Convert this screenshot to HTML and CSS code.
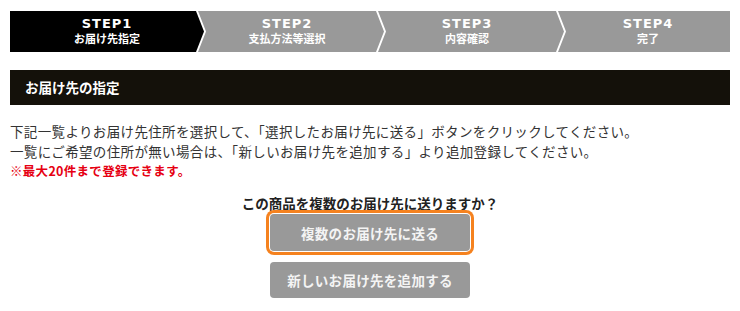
FILE: index.html
```html
<!DOCTYPE html>
<html lang="ja">
<head>
<meta charset="utf-8">
<title>お届け先の指定</title>
<link rel="stylesheet" href="styles.css">
</head>
<body>
<div class="page">
  <ol class="steps">
    <li class="step step--first step--active"><span class="step__num">STEP1</span><span class="step__label">お届け先指定</span></li>
    <li class="step step--mid"><span class="step__num">STEP2</span><span class="step__label">支払方法等選択</span></li>
    <li class="step step--mid"><span class="step__num">STEP3</span><span class="step__label">内容確認</span></li>
    <li class="step step--last"><span class="step__num">STEP4</span><span class="step__label">完了</span></li>
  </ol>

  <h2 class="heading">お届け先の指定</h2>

  <div class="intro">
    <p>下記一覧よりお届け先住所を選択して、「選択したお届け先に送る」ボタンをクリックしてください。</p>
    <p>一覧にご希望の住所が無い場合は、「新しいお届け先を追加する」より追加登録してください。</p>
    <p class="note">※最大20件まで登録できます。</p>
  </div>

  <div class="actions">
    <p class="question">この商品を複数のお届け先に送りますか？</p>
    <button class="btn btn--focus" type="button">複数のお届け先に送る</button>
    <button class="btn" type="button">新しいお届け先を追加する</button>
  </div>
</div>
</body>
</html>
```

FILE: styles.css
```css
* { box-sizing: border-box; }

html, body {
  margin: 0;
  padding: 0;
  background: #fff;
}

body {
  font-family: "Noto Sans CJK JP", "Noto Sans", sans-serif;
  color: #333;
}

.page {
  width: 720px;
  margin: 0 10px;
  padding-top: 11px;
}

.steps {
  list-style: none;
  margin: 0;
  padding: 0;
  display: flex;
  height: 41px;
}

.step {
  flex: 0 0 auto;
  height: 41px;
  background: #999;
  color: #fff;
  display: flex;
  flex-direction: column;
  align-items: center;
  padding-top: 5px;
  font-weight: bold;
}

.step--active { background: #000; }

.step--first {
  width: 194px;
  clip-path: polygon(0 0, calc(100% - 8px) 0, 100% 50%, calc(100% - 8px) 100%, 0 100%);
}

.step--mid {
  width: 186px;
  margin-left: -6px;
  padding-right: 8px;
  clip-path: polygon(0 0, calc(100% - 8px) 0, 100% 50%, calc(100% - 8px) 100%, 0 100%, 8px 50%);
}

.step--last {
  width: 172px;
  margin-left: -6px;
  padding-left: 8px;
  clip-path: polygon(0 0, 100% 0, 100% 100%, 0 100%, 8px 50%);
}

.step__num {
  font-family: "DejaVu Sans", Verdana, sans-serif;
  font-size: 13px;
  line-height: 15px;
  letter-spacing: 1px;
  font-weight: bold;
}

.step__label {
  font-size: 11px;
  line-height: 14px;
  font-weight: bold;
}

.heading {
  margin: 18px 0 0;
  height: 35px;
  background: #14110a;
  color: #fff;
  font-size: 13.5px;
  font-weight: bold;
  line-height: 35px;
  padding-left: 15px;
}

.intro {
  margin-top: 16px;
}

.intro p {
  margin: 0;
  font-size: 13.5px;
  line-height: 20px;
  letter-spacing: 0.35px;
}

.intro .note {
  color: #e60012;
  font-size: 12.5px;
  font-weight: bold;
  letter-spacing: 0.3px;
}

.actions {
  margin-top: 12px;
  display: flex;
  flex-direction: column;
  align-items: center;
}

.question {
  margin: 0 0 1px;
  font-size: 13.5px;
  line-height: 20px;
  font-weight: bold;
  color: #222;
}

.btn {
  width: 200px;
  height: 37px;
  border: 0;
  border-radius: 4px;
  background: #999;
  color: #f4f4f4;
  font-family: "Noto Sans CJK JP", "Noto Sans", sans-serif;
  font-size: 13.5px;
  font-weight: bold;
  letter-spacing: 0.3px;
  padding: 0;
}

.btn--focus {
  box-shadow: 0 0 0 1px #fff, 0 0 0 4px #f5821f;
}

.btn + .btn {
  margin-top: 11px;
  height: 36px;
}
```
